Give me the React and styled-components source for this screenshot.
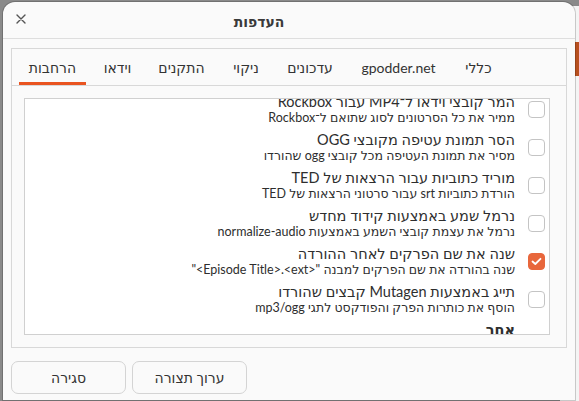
import React from 'react';
import styled, { createGlobalStyle } from 'styled-components';

const GlobalStyle = createGlobalStyle`
  html, body {
    margin: 0;
    padding: 0;
    background: #8a8a8a;
    overflow: hidden;
  }
  body {
    font-family: "Lato", "DejaVu Sans", sans-serif;
    color: #333333;
  }
`;

// Desktop behind the dialog
const Desktop = styled.div`
  position: relative;
  width: 579px;
  height: 401px;
  overflow: hidden;
  background: #8a8a8a;
`;

const BackWindow = styled.div`
  position: absolute;
  left: 560px;
  top: 6px;
  width: 40px;
  height: 400px;
  background: #f4f4f4;
  display: flex;
  flex-direction: column;
`;

const BackBand = styled.div`
  margin-top: 36px;
  height: 34px;
  background: #b8501f;
`;

// Dialog window
const Dialog = styled.div`
  position: absolute;
  left: 3px;
  top: 2px;
  width: 572px;
  height: 398px;
  background: #fafafa;
  border-radius: 12px 12px 0 0;
  box-shadow: 0 0 0 1px rgba(0, 0, 0, 0.18);
  display: flex;
  flex-direction: column;
  overflow: hidden;
`;

const Header = styled.div`
  height: 36px;
  flex: none;
  border-bottom: 1px solid #dedede;
  display: flex;
  align-items: center;
  position: relative;
`;

const CloseButton = styled.div`
  position: absolute;
  left: 10px;
  top: 9px;
  width: 16px;
  height: 16px;
  display: flex;
  align-items: center;
  justify-content: center;
  color: #555;
`;

const Title = styled.div`
  width: 100%;
  text-align: center;
  padding-right: 60px;
  box-sizing: border-box;
  font-weight: bold;
  font-size: 14px;
  color: #3a3a3a;
  margin-top: 2px;
`;

const Notebook = styled.div`
  margin: 9px 8px 0 8px;
  height: 300px;
  box-sizing: border-box;
  border: 1px solid #d8d8d8;
  background: #ffffff;
  display: flex;
  flex-direction: column;
`;

const TabBar = styled.div`
  height: 36px;
  flex: none;
  border-bottom: 1px solid #d8d8d8;
  display: flex;
  justify-content: flex-end;
  gap: 8px;
  padding-left: 7px;
  background: #fafafa;
`;

const Tab = styled.div`
  width: ${props => props.width}px;
  display: flex;
  align-items: center;
  justify-content: center;
  font-size: 14px;
  color: #333;
  white-space: nowrap;
  box-sizing: border-box;
  border-bottom: 3px solid ${props => (props.active ? '#e95420' : 'transparent')};
  padding-top: 3px;
`;

const Page = styled.div`
  flex: 1;
  padding: 12px 16px 12px 12px;
  display: flex;
  background: #fafafa;
`;

const ListFrame = styled.div`
  flex: 1;
  border: 1px solid #d0d0d0;
  background: #ffffff;
  overflow: hidden;
  height: 237px;
  box-sizing: border-box;
`;

const ListInner = styled.div`
  margin-top: -9px;
`;

const Row = styled.div`
  display: flex;
  align-items: center;
  height: 38px;
  padding-right: 4px;
`;

const Check = styled.div`
  width: 17px;
  height: 17px;
  flex: none;
  box-sizing: border-box;
  border-radius: 4px;
  border: 1px solid ${props => (props.checked ? '#e8673c' : '#c4c4c4')};
  background: ${props => (props.checked ? '#e8673c' : '#ffffff')};
  display: flex;
  align-items: center;
  justify-content: center;
  margin-left: 13px;
`;

const RowText = styled.div`
  display: flex;
  flex-direction: column;
`;

const RowTitle = styled.div`
  font-size: 14.5px;
  line-height: 17px;
  color: #2e2e2e;
  white-space: nowrap;
`;

const RowSub = styled.div`
  font-size: 12.5px;
  line-height: 15px;
  color: #2e2e2e;
  white-space: nowrap;
`;

const Section = styled.div`
  font-weight: bold;
  font-size: 14.5px;
  padding-right: 34px;
  padding-top: 3px;
  color: #2e2e2e;
`;

const ButtonRow = styled.div`
  display: flex;
  justify-content: flex-end;
  gap: 6px;
  padding: 13px 8px 0 8px;
`;

const Button = styled.div`
  width: 115px;
  height: 33px;
  box-sizing: border-box;
  border: 1px solid #d4d4d4;
  border-radius: 7px;
  background: #fafafa;
  display: flex;
  align-items: center;
  justify-content: center;
  font-size: 14px;
  color: #333;
`;

const tabs = [
  { label: 'כללי', width: 47 },
  { label: 'gpodder.net', width: 97 },
  { label: 'עדכונים', width: 64 },
  { label: 'ניקוי', width: 48 },
  { label: 'התקנים', width: 65 },
  { label: 'וידאו', width: 47 },
  { label: 'הרחבות', width: 67, active: true },
];

const extensions = [
  { title: 'המר קובצי וידאו ל־MP4 עבור Rockbox', sub: 'ממיר את כל הסרטונים לסוג שתואם ל־Rockbox' },
  { title: 'הסר תמונת עטיפה מקובצי OGG', sub: 'מסיר את תמונת העטיפה מכל קובצי ogg שהורדו' },
  { title: 'מוריד כתוביות עבור הרצאות של TED', sub: 'הורדת כתוביות srt עבור סרטוני הרצאות של TED' },
  { title: 'נרמל שמע באמצעות קידוד מחדש', sub: 'נרמל את עצמת קובצי השמע באמצעות normalize-audio' },
  { title: 'שנה את שם הפרקים לאחר ההורדה', sub: 'שנה בהורדה את שם הפרקים למבנה "<Episode Title>.<ext>"', checked: true },
  { title: 'תייג באמצעות Mutagen קבצים שהורדו', sub: 'הוסף את כותרות הפרק והפודקסט לתגי mp3/ogg' },
];

const CheckMark = () => (
  <svg width="11" height="9" viewBox="0 0 11 9">
    <path d="M1.5 4.5 L4.3 7 L9.5 1.8" fill="none" stroke="#fff" strokeWidth="1.8" strokeLinecap="round" strokeLinejoin="round" />
  </svg>
);

const CloseIcon = () => (
  <svg width="10" height="10" viewBox="0 0 10 10">
    <path d="M1 1 L9 9 M9 1 L1 9" stroke="#555" strokeWidth="1.4" strokeLinecap="round" />
  </svg>
);

const App = () => (
  <>
    <GlobalStyle />
    <Desktop>
      <BackWindow>
        <BackBand />
      </BackWindow>
      <Dialog dir="rtl">
        <Header>
          <Title>העדפות</Title>
          <CloseButton><CloseIcon /></CloseButton>
        </Header>
        <Notebook>
          <TabBar>
            {tabs.map(t => (
              <Tab key={t.label} width={t.width} active={t.active}>{t.label}</Tab>
            ))}
          </TabBar>
          <Page>
            <ListFrame>
              <ListInner>
                {extensions.map((ext, i) => (
                  <Row key={i}>
                    <Check checked={ext.checked}>{ext.checked && <CheckMark />}</Check>
                    <RowText>
                      <RowTitle>{ext.title}</RowTitle>
                      <RowSub>{ext.sub}</RowSub>
                    </RowText>
                  </Row>
                ))}
                <Section>אחר</Section>
              </ListInner>
            </ListFrame>
          </Page>
        </Notebook>
        <ButtonRow>
          <Button>ערוך תצורה</Button>
          <Button>סגירה</Button>
        </ButtonRow>
      </Dialog>
    </Desktop>
  </>
);

export default App;
